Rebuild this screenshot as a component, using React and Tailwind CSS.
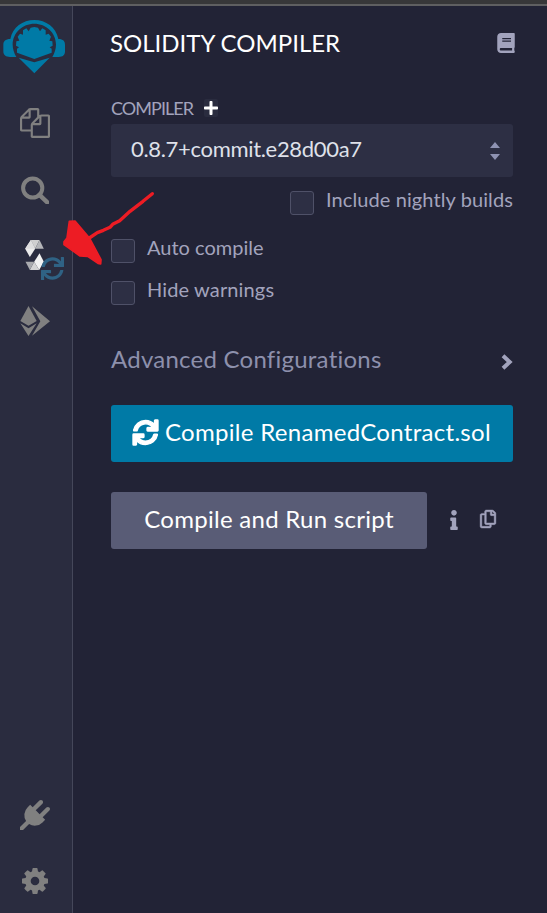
import { FaBook, FaSync, FaInfo, FaRegCopy, FaPlus } from "react-icons/fa";

function RemixLogo() {
  return (
    <svg className="block h-[54px] w-[62px]" viewBox="9 60 186 162" fill="#007aa6">
      <path d="M31 117 C38 82 68 60 103 60 C138 60 168 82 175 117 C190 117 195 124 195 134 V154 C195 166 188 171 176 171 H157 C164 158 168 146 168 134 C168 98 138 71 103 71 C68 71 38 98 38 134 C38 146 42 158 49 171 H30 C18 171 10 166 10 154 V134 C10 124 16 117 31 117Z" />
      <path d="M51 158 V146 L57 142 L48 137 L49 124 L58 122 L53 110 L60 101 L69 104 L69 91 L79 85 L86 94 L92 83 L103 81 L114 83 L120 94 L127 85 L137 91 L137 104 L146 101 L153 110 L148 122 L157 124 L158 137 L149 142 L155 146 V158 L103 177Z" />
      <path d="M56 173 L103 187 L149 173 L103 220Z" />
    </svg>
  );
}

function FilesIcon() {
  return (
    <svg className="block size-[30px]" viewBox="0 0 1792 1792" fill="#808080">
      <path d="M1696 384q40 0 68 28t28 68v1216q0 40-28 68t-68 28h-960q-40 0-68-28t-28-68v-288h-544q-40 0-68-28t-28-68v-672q0-40 20-88t48-76l408-408q28-28 76-48t88-20h416q40 0 68 28t28 68v328q68-40 128-40h416zm-544 213l-299 299h299v-299zm-640-384l-299 299h299v-299zm196 647l316-316v-416h-384v416q0 40-28 68t-68 28h-416v640h512v-256q0-40 20-88t48-76zm956 804v-1152h-384v416q0 40-28 68t-68 28h-416v640h896z" />
    </svg>
  );
}

function SearchIcon() {
  return (
    <svg className="block size-7" viewBox="0 0 28 28" fill="none" stroke="#808080">
      <circle cx="11.7" cy="12" r="9.6" strokeWidth="4" />
      <path d="M18.5 18.8 L26.3 26.3" strokeWidth="4.4" strokeLinecap="round" />
    </svg>
  );
}

function SolidityIcon() {
  return (
    <svg className="block h-[30px] w-[19px]" viewBox="76 180 56 90">
      <path d="M93 180 L76 206 L90 231 L106 206Z" fill="#ececec" />
      <path d="M93 180 H119 L106 206Z" fill="#cfcfd0" />
      <path d="M93 180 L106 206 H76Z" fill="#dededf" />
      <path d="M119 180 L132 206 H106Z" fill="#b4b5b9" />
      <path d="M119 220 L132 245 L118 270 L103 245Z" fill="#f2f2f2" />
      <path d="M118 270 H90 L103 245Z" fill="#d4d4d5" />
      <path d="M90 270 L77 245 H103Z" fill="#a9aaae" />
    </svg>
  );
}

function DeployIcon() {
  return (
    <svg className="block size-[30px]" viewBox="60 378 90 90" fill="#808080">
      <path d="M85.500 378 L110 423 L85.500 437 L61 423Z" />
      <path d="M61 430 L85.500 445 L110 430 L85.500 468Z" />
      <path d="M96 379 L150 424 L96 467 L121 424Z" />
    </svg>
  );
}

function PlugIcon() {
  return (
    <svg className="block size-[30px]" viewBox="0 0 1792 1792" fill="#808080">
      <path d="M1755 453q37 38 37 90.500t-37 90.500l-401 400 150 150-160 160q-163 163-389.500 186.500t-411.500-100.500l-362 362h-181v-181l362-362q-124-185-100.500-411.500t186.500-389.500l160-160 150 150 400-401q38-37 91-37t90 37 37 90.500-37 90.500l-400 401 234 234 401-400q38-37 91-37t90 37z" />
    </svg>
  );
}

function CogIcon() {
  return (
    <svg className="block size-[26px]" viewBox="128 128 1536 1536" fill="#808080">
      <path d="M1152 896q0-106-75-181t-181-75-181 75-75 181 75 181 181 75 181-75 75-181zm512-109v222q0 12-8 23t-20 13l-185 28q-19 54-39 91 35 50 107 138 10 12 10 25t-9 23q-27 37-99 108t-94 71q-12 0-26-9l-138-108q-44 23-91 38-16 136-29 186-7 28-36 28h-222q-14 0-24.500-8.500t-11.500-21.500l-28-184q-49-16-90-37l-141 107q-10 9-25 9-14 0-25-11-126-114-165-168-7-10-7-23 0-12 8-23 15-21 51-66.500t54-70.500q-27-50-41-99l-183-27q-13-2-21-12.500t-8-23.500v-222q0-12 8-23t19-13l186-28q14-46 39-92-40-57-107-138-10-12-10-24 0-10 9-23 26-36 98.500-107.500t94.500-71.500q13 0 26 10l138 107q44-23 91-38 16-136 29-186 7-28 36-28h222q14 0 24.500 8.500t11.500 21.500l28 184q49 16 90 37l142-107q9-9 24-9 13 0 25 10 129 119 165 170 7 8 7 22 0 12-8 23-15 21-51 66.500t-54 70.500q26 50 41 98l183 28q13 2 21 12.500t8 23.500z" />
    </svg>
  );
}

function PointerArrow() {
  return (
    <svg className="pointer-events-none absolute left-[60px] top-[188px] h-[80px] w-[98px]" viewBox="180 24 294 240" fill="#ed1c24" stroke="#ed1c24" strokeLinejoin="round" strokeLinecap="round">
      <path d="M208 124 L225 123 L269 175 L303 239 L302 252 L294 250 L263 229 L240 228 L212 208 L192 194 L192 185 L201 174Z" strokeWidth="5" />
      <path d="M268 174 L292 158 L310 151 L330 142 L338 133 L359 122 L390 94 L429 64 L457 41" fill="none" strokeWidth="10" />
    </svg>
  );
}

function Checkbox({ label, tracking }) {
  return (
    <label className="flex">
      <span className="mt-[3px] size-6 rounded-[3px] border border-[#4f5168] bg-[#2d2f44]" />
      <span className={"-mt-px ml-3 text-[20px] leading-6 whitespace-nowrap " + tracking}>{label}</span>
    </label>
  );
}

export default function App() {
  return (
    <div className="relative flex h-[913px] w-[547px] flex-col overflow-hidden bg-[#222336] font-[Lato,sans-serif] text-[#a2a3bd]">
      <div className="h-1.5 shrink-0 border-b-2 border-[#5f5f61] bg-[#373739]" />
      <div className="flex min-h-0 flex-1">
        <nav className="flex w-[73px] shrink-0 flex-col items-center border-r border-[#45475a] bg-[#2a2c3f] pt-3.5 pr-0.5">
          <div className="-ml-0.5"><RemixLogo /></div>
          <div className="mt-[34px]"><FilesIcon /></div>
          <div className="mt-[38px]"><SearchIcon /></div>
          <div className="relative mt-9 mr-px">
            <SolidityIcon />
            <FaSync className="absolute top-[17px] left-4 size-[23px] text-[#2f6284]" />
          </div>
          <div className="mt-9"><DeployIcon /></div>
          <div className="mt-auto"><PlugIcon /></div>
          <div className="mt-[38px] mb-[19px]"><CogIcon /></div>
        </nav>
        <main className="flex flex-1 flex-col pl-[38px] pr-[34px]">
          <header className="mt-[22px] flex h-[30px] items-center justify-between">
            <h1 className="-ml-px text-[24px] leading-[30px] whitespace-nowrap text-white">SOLIDITY COMPILER</h1>
            <FaBook className="-mr-[3px] h-5 w-[20px]" />
          </header>
          <div className="mt-[38px] flex h-6 items-center">
            <span className="text-[18px] leading-6 tracking-[-0.95px]">COMPILER</span>
            <span className="ml-[11px] flex h-[18px] w-[14px] items-center justify-center rounded-xs bg-[#2a2c3f]">
              <FaPlus className="size-4 shrink-0 text-white" />
            </span>
          </div>
          <div className="mt-1 flex h-[53px] items-center justify-between rounded-[3px] bg-[#2d2f44] pl-5 pr-[13px] text-[#dfe1ea]">
            <span className="-mt-[3px] text-[22px] leading-7 tracking-[-0.32px]">0.8.7+commit.e28d00a7</span>
            <svg className="h-[18px] w-2.5" viewBox="0 0 10 18" fill="#8f93b3">
              <path d="M0 6 L5 0 L10 6Z M0 12 L5 18 L10 12Z" />
            </svg>
          </div>
          <div className="mt-[11px] flex justify-end"><Checkbox label="Include nightly builds" tracking="tracking-[0.1px]" /></div>
          <div className="mt-[21px]"><Checkbox label="Auto compile" tracking="tracking-[0px]" /></div>
          <div className="mt-[15px]"><Checkbox label="Hide warnings" tracking="tracking-[0.14px]" /></div>
          <div className="mt-[39px] flex h-[30px] items-center justify-between">
            <span className="text-[24px] leading-[30px] tracking-[0.24px] text-[#8d90ac]">Advanced Configurations</span>
            <svg className="mt-1.5 h-4 w-3" viewBox="0 0 12 16" fill="none" stroke="currentColor" strokeWidth="4">
              <path d="M2 1.800 L8.700 8 L2 14.200" />
            </svg>
          </div>
          <button className="mt-[31px] flex h-[57px] items-center rounded-[3px] bg-[#007aa6] pl-[22px] text-[24px] whitespace-nowrap text-white">
            <FaSync className="-mt-0.5 mr-2 size-[25px] overflow-visible stroke-white stroke-[28]" />
            <span className="-mt-[3px] -ml-px tracking-[0.3px]">Compile RenamedContract.sol</span>
          </button>
          <div className="mt-[30px] flex h-[57px] items-center">
            <button className="h-[57px] w-[316px] rounded-[3px] bg-[#595c76] pb-[3px] text-[24px] tracking-[0.28px] text-white">Compile and Run script</button>
            <FaInfo className="-mt-px ml-[17px] h-5 w-5" />
            <FaRegCopy className="-mt-[3px] ml-4 h-[18px] w-[16px] overflow-visible stroke-current stroke-[12]" />
          </div>
        </main>
      </div>
      <PointerArrow />
    </div>
  );
}
